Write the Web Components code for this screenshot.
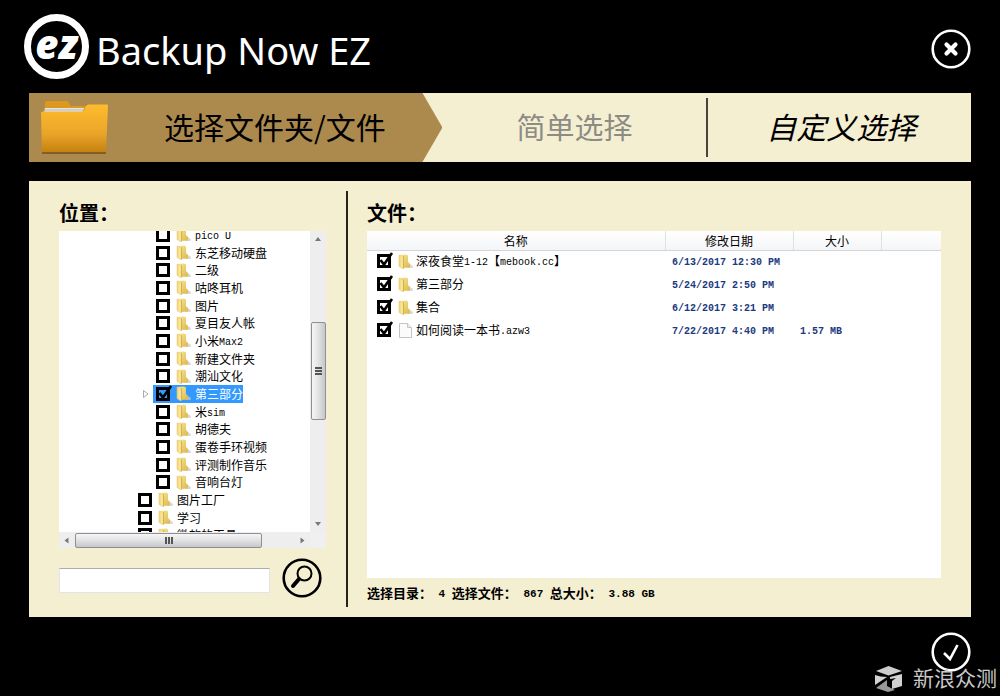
<!DOCTYPE html>
<html lang="zh-CN">
<head>
<meta charset="utf-8">
<title>Backup Now EZ</title>
<style>
  html, body { margin: 0; background: #000; }
  body { font-family: "Noto Sans CJK SC", sans-serif; font-size: 12px; color: #000; }
</style>
</head>
<body>
<backup-app></backup-app>

<script>
const define = (name, html, setup) => {
  const template = document.createElement('template');
  template.innerHTML = html;
  customElements.define(name, class extends HTMLElement {
    connectedCallback() {
      if (this.shadowRoot) return;
      const root = this.attachShadow({ mode: 'open' });
      root.append(template.content.cloneNode(true));
      if (setup) setup(this, root);
    }
  });
};

/* Half-width characters are set in the monospaced face. */
const mixed = text => text.replace(/[!-~]+( [!-~]+)*/g, run => `<span class="latin">${run}</span>`);

define('folder-icon', `
  <style>:host { display: block; width: 15px; height: 15px; flex: none; } svg { display: block; }</style>
  <svg width="15" height="15" viewBox="0 0 15 15" aria-hidden="true">
    <defs>
      <linearGradient id="f" x1="0" x2="1"><stop offset="0" stop-color="#f0d26c"/><stop offset="1" stop-color="#fdf0b0"/></linearGradient>
      <linearGradient id="b" x1="0" x2="1" y1="0" y2="1"><stop offset="0" stop-color="#fbe998"/><stop offset="1" stop-color="#dcb84a"/></linearGradient>
    </defs>
    <path d="M9 14h5.500l.5-2-3-2z" fill="#c9c9c9" opacity=".7"/>
    <path d="M1 1 8 .5l2 1V8l2 2v3.500L5 14z" fill="url(#b)"/>
    <path d="M1 1 5 2.500V15l-4-2.500z" fill="url(#f)" stroke="#e2c873" stroke-width=".5"/>
    <path d="M5 2.500 6 2v12l-1 1z" fill="#d3b050"/>
  </svg>`);

define('page-icon', `
  <style>:host { display: block; width: 15px; height: 15px; flex: none; } svg { display: block; }</style>
  <svg width="15" height="15" viewBox="0 0 15 15" aria-hidden="true">
    <path d="M1.500.5h8l4 4v10h-12z" fill="#fbfbfb" stroke="#c4c4c4"/>
    <path d="M9.500.5v4h4" fill="#eee" stroke="#c4c4c4"/>
  </svg>`);

define('check-box', `
  <style>
    :host { display: block; position: relative; width: 14px; height: 14px; flex: none; }
    input { appearance: none; display: block; box-sizing: border-box; width: 14px; height: 14px; margin: 0; border: 3px solid #000; background: #fff; }
    svg { display: none; position: absolute; left: 0; top: -2px; pointer-events: none; overflow: visible; }
    :host([checked]) svg { display: block; }
    :host([plain]) input { background: transparent; }
  </style>
  <input type="checkbox">
  <svg width="16" height="16" viewBox="0 0 16 16" aria-hidden="true"><path d="M3.500 8 7 12.500 15 1" fill="none" stroke="#000" stroke-width="2.600"/></svg>`,
  (host, root) => {
    const input = root.querySelector('input');
    input.checked = host.hasAttribute('checked');
    input.setAttribute('aria-label', host.getAttribute('label'));
    input.addEventListener('change', () => host.toggleAttribute('checked', input.checked));
  });

define('round-button', `
  <style>
    :host { display: block; flex: none; }
    button { display: block; width: 40px; height: 40px; padding: 0; border: 0; background: none; color: inherit; }
    svg { display: block; }
  </style>
  <button type="button"><svg width="40" height="40" viewBox="0 0 40 40" fill="none" stroke="currentColor">
    <circle cx="20" cy="20" r="18.300" stroke-width="2.600"/><g></g></svg></button>`,
  (host, root) => {
    const glyphs = {
      close: '<path d="m15.500 15.500 9 9m0-9-9 9" stroke-width="4.200" stroke-linecap="round"/>',
      search: '<circle cx="22.500" cy="15.500" r="7" stroke-width="2"/><path d="m17 21-6 7" stroke-width="4" stroke-linecap="round"/>',
      accept: '<path d="m13 21 6 6 7.500-14" stroke-width="2.600"/>'
    };
    root.querySelector('g').innerHTML = glyphs[host.getAttribute('icon')];
    root.querySelector('button').setAttribute('aria-label', host.getAttribute('label'));
  });

define('app-brand', `
  <style>
    :host { display: flex; align-items: center; gap: 7px; color: #fff; }
    .mark { box-sizing: border-box; width: 65px; height: 65px; border: 7px solid #fff; border-radius: 50%; display: flex; align-items: center; justify-content: center;
      font: italic 800 40px/1 "Open Sans", sans-serif; padding-bottom: 5px; }
    h1 { margin: 0; padding-top: 6px; font: 400 38px/48px "Noto Sans", sans-serif; white-space: nowrap; }
  </style>
  <div class="mark">ez</div>
  <h1>Backup Now EZ</h1>`);

define('step-bar', `
  <style>
    :host { display: grid; grid-template-columns: 413fr 264fr 264fr; height: 69px; background: #f5efd2; font-size: 29px; line-height: 67px; }
    a { color: inherit; text-decoration: none; display: flex; justify-content: center; white-space: nowrap; }
    .current { background: #ac8a4d; padding-left: 12px; gap: 56px; justify-content: flex-start;
      clip-path: polygon(0 0, calc(100% - 20px) 0, 100% 50%, calc(100% - 20px) 100%, 0 100%); font-size: 30px; }
    .current svg { margin-top: 8px; }
    .simple { color: #8c8b86; }
    .custom { font-style: italic; font-size: 30px; position: relative; padding-left: 5px; }
    .custom::before { content: ""; position: absolute; left: -1px; top: 5px; bottom: 5px; width: 2px; background: #4a433c; }
  </style>
  <a class="current" href="#files" aria-current="step">
    <svg width="67" height="54" viewBox="0 0 67 54" aria-hidden="true">
      <defs>
        <linearGradient id="front" x1="0" x2="0" y1="0" y2="1"><stop offset="0" stop-color="#ffbb2d"/><stop offset=".6" stop-color="#eba62a"/><stop offset="1" stop-color="#c5820f"/></linearGradient>
      </defs>
      <path d="M1 51h64v2H1z" fill="#6d4f1a" opacity=".7"/>
      <path d="M3 14 4 2q0-2 2-2h20q2 0 2 2l2 3h16v10z" fill="#dc9820"/>
      <path d="M4 7h39l-2 5H3z" fill="#e4e4e6"/><path d="M4 9h38" stroke="#b9b9be"/>
      <path d="M0 12q0-1.500 2-1.500h39q2 0 2.500-2L45 5q1-1.500 3-1.500h18q1 0 1 1L65 51H1z" fill="url(#front)"/>
    </svg>
    <span>选择文件夹/文件</span></a>
  <a class="simple" href="#simple">简单选择</a>
  <a class="custom" href="#custom">自定义选择</a>`);

define('scroll-bar', `
  <style>
    :host { display: flex; flex-direction: column; align-items: center; background: #eee; width: 16px; }
    :host([horizontal]) { flex-direction: row; width: auto; height: 16px; }
    .arrow { width: 16px; height: 17px; flex: none; }
    .before { flex: 75 1 0; } .after { flex: 96 1 0; }
    .thumb { box-sizing: border-box; flex: 97 1 0; width: 15px; border: 1px solid #8f8f94; border-radius: 2px; background: linear-gradient(90deg, #f6f6f6, #e4e4e6 45%, #c6c7cb); display: flex; align-items: center; justify-content: center; }
    .grip { width: 7px; height: 8px; background: repeating-linear-gradient(#555 0 2px, transparent 2px 3px); }
    :host([horizontal]) .before { flex: 0 0 0; }
    :host([horizontal]) .thumb { flex: 186 1 0; width: auto; height: 15px; background: linear-gradient(#f6f6f6, #e4e4e6 45%, #c6c7cb); }
    :host([horizontal]) .after { flex: 32 1 0; }
    :host([horizontal]) .grip { width: 8px; height: 7px; background: repeating-linear-gradient(90deg, #555 0 2px, transparent 2px 3px); }
    path { fill: #77787c; }
    :host([horizontal]) svg { transform: rotate(-90deg); }
  </style>
  <svg class="arrow" viewBox="0 0 16 17"><path d="M5 10h6L8 6z"/></svg>
  <div class="before"></div><div class="thumb"><div class="grip"></div></div><div class="after"></div>
  <svg class="arrow" viewBox="0 0 16 17"><path d="M5 7h6l-3 4z"/></svg>`);

define('tree-item', `
  <style>
    :host { display: flex; align-items: center; min-height: 0; padding-left: 76px; }
    :host([deep]) { padding-left: 94px; }
    .row { display: flex; align-items: center; height: 18px; padding-left: 3px; line-height: 18px; white-space: nowrap; }
    folder-icon { margin: 0 4px 0 6px; }
    :host([selected]) { padding-left: 84px; }
    :host([selected]) .row { background: #3399ff; color: #fff; }
    .twist { display: none; width: 6px; height: 10px; margin-right: 4px; fill: #fff; stroke: #aaa; }
    :host([selected]) .twist { display: block; }
    .latin { font-family: "Liberation Mono", monospace; font-size: 10px; line-height: 1; vertical-align: 1px; }
  </style>
  <svg class="twist" viewBox="0 0 6 10"><path d="M.5 1.500 5 5 .5 8.500z"/></svg>
  <div class="row"><check-box></check-box><folder-icon></folder-icon><span class="name"></span></div>`,
  (host, root) => {
    const name = host.getAttribute('name');
    const box = root.querySelector('check-box');
    root.querySelector('.name').innerHTML = mixed(name);
    const input = box.shadowRoot.querySelector('input');
    input.setAttribute('aria-label', name);
    if (host.hasAttribute('selected')) {
      box.setAttribute('checked', ''); box.setAttribute('plain', ''); input.checked = true;
    }
  });

define('location-tree', `
  <style>
    :host { display: grid; grid-template-columns: 1fr 16px; grid-template-rows: 301px 16px; background: #fff; }
    .view { overflow: hidden; }
    .items { display: grid; grid-auto-rows: 1fr; height: 318px; margin-top: -5px; }
    .corner { background: #f0f0f0; }
  </style>
  <div class="view"><div class="items" role="tree"></div></div>
  <scroll-bar></scroll-bar>
  <scroll-bar horizontal></scroll-bar>
  <div class="corner"></div>`,
  (host, root) => {
    const deep = ['pico U', '东芝移动硬盘', '二级', '咕咚耳机', '图片', '夏目友人帐', '小米Max2', '新建文件夹', '潮汕文化', '第三部分', '米sim', '胡德夫', '蛋卷手环视频', '评测制作音乐', '音响台灯'];
    const top = ['图片工厂', '学习', '微软的工具'];
    root.querySelector('.items').innerHTML =
      deep.map(n => `<tree-item deep name="${n}"${n === '第三部分' ? ' selected' : ''}></tree-item>`).join('') +
      top.map(n => `<tree-item name="${n}"></tree-item>`).join('');
  });

define('file-table', `
  <style>
    :host { display: block; background: #fff; min-height: 347px; }
    table { width: 100%; table-layout: fixed; border-collapse: collapse; }
    th { height: 19px; padding: 0; font-weight: 400; line-height: 18px; background: linear-gradient(#fff, #f4f5f8); border-bottom: 1px solid #d5d5d8; border-right: 1px solid #dfe0e4; }
    th:last-child { border-right: 0; }
    td { height: 23px; padding: 0 0 0 7px; line-height: 20px; white-space: nowrap; color: #1c3a80; vertical-align: top; }
    td:first-child { padding-left: 10px; color: #000; }
    .cell { display: flex; align-items: center; height: 20px; }
    folder-icon, page-icon { margin: 0 3px 0 7px; }
    .latin { font-family: "Liberation Mono", monospace; font-size: 10px; line-height: 1; vertical-align: 1px; }
    td + td .latin { font-weight: 700; }
  </style>
  <table>
    <colgroup><col><col style="width:128px"><col style="width:88px"><col style="width:60px"></colgroup>
    <thead><tr><th>名称</th><th>修改日期</th><th>大小</th><th></th></tr></thead>
    <tbody></tbody>
  </table>`,
  (host, root) => {
    const files = [
      ['folder', '深夜食堂1-12【mebook.cc】', '6/13/2017 12:30 PM', ''],
      ['folder', '第三部分', '5/24/2017 2:50 PM', ''],
      ['folder', '集合', '6/12/2017 3:21 PM', ''],
      ['page', '如何阅读一本书.azw3', '7/22/2017 4:40 PM', '1.57 MB']
    ];
    root.querySelector('tbody').innerHTML = files.map(([icon, name, date, size]) =>
      `<tr><td><div class="cell"><check-box checked label="${name}"></check-box><${icon}-icon></${icon}-icon><span>${mixed(name)}</span></div></td>` +
      `<td><div class="cell"><span>${mixed(date)}</span></div></td><td><div class="cell"><span>${mixed(size)}</span></div></td><td></td></tr>`).join('');
  });

define('backup-panel', `
  <style>
    :host { display: grid; grid-template-columns: 319px 1fr; background: #f5efd2; padding: 10px 0; }
    section { padding: 6px 0 0 30px; }
    .locations { border-right: 2px solid #26221c; padding-right: 20px; }
    .files { padding-left: 19px; padding-right: 30px; }
    h2 { margin: 0; padding-bottom: 2px; font-size: 20px; line-height: 32px; font-weight: 700; }
    .search { display: flex; align-items: center; justify-content: space-between; margin: 10px 4px 9px 0; }
    input { box-sizing: border-box; width: 211px; height: 25px; margin: 4px 0 0; padding: 0 4px; border: 1px solid #e3e3e8; border-top-color: #abadb3; background: #fff; }
    p { margin: 0; font-size: 13px; line-height: 29px; font-weight: 700; white-space: pre; }
    .latin { font-family: "Liberation Mono", monospace; font-size: 11px; line-height: 1; vertical-align: 1px; }
  </style>
  <section class="locations">
    <h2>位置：</h2>
    <location-tree></location-tree>
    <div class="search"><input type="text" aria-label="搜索"><round-button icon="search" label="搜索"></round-button></div>
  </section>
  <section class="files">
    <h2>文件：</h2>
    <file-table></file-table>
    <p>选择目录：<span class="latin"> 4 </span>选择文件：<span class="latin"> 867 </span>总大小：<span class="latin"> 3.88 GB</span></p>
  </section>`);

define('site-watermark', `
  <style>
    :host { display: flex; align-items: center; gap: 11px; color: #c9c9c9; font-size: 21px; line-height: 30px; white-space: nowrap; }
    span { padding-bottom: 4px; }
  </style>
  <svg width="27" height="26" viewBox="0 0 27 26" aria-hidden="true">
    <path d="M1 5 13.500 0 27 5l-13.500 4.500z" fill="#ccc"/>
    <path d="M0 9q5 2 12 2L0 19zM27 8v12l-10 3v-8l4-3-6 1v-2z" fill="#d2d2d2"/>
    <path d="M1 22 12 14v6l8 4-7 2z" fill="#999"/>
  </svg><span>新浪众测</span>`);

define('backup-app', `
  <style>
    :host { display: block; position: relative; padding: 14px 29px 24px; }
    header { display: flex; justify-content: space-between; align-items: center; height: 65px; margin: 0 0 14px -5px; }
    header round-button { margin-top: 4px; }
    header, footer { color: #fff; }
    step-bar { margin-bottom: 19px; }
    footer { display: flex; justify-content: flex-end; padding-top: 15px; }
    site-watermark { position: absolute; right: 3px; bottom: 0; }
  </style>
  <header><app-brand></app-brand><round-button icon="close" label="关闭"></round-button></header>
  <main><step-bar></step-bar><backup-panel></backup-panel></main>
  <footer><round-button icon="accept" label="确定"></round-button></footer>
  <site-watermark></site-watermark>`);
</script>
</body>
</html>
